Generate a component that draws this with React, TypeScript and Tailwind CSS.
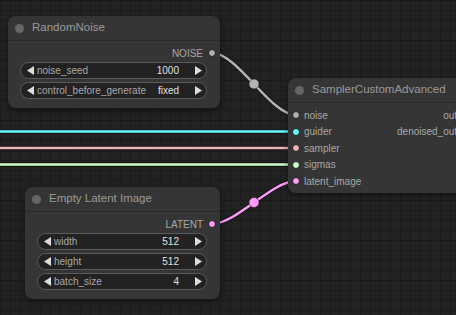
import React from "react";

const FONT = { fontFamily: '"Liberation Sans", Arial, sans-serif' };

function Arrow({ dir }: { dir: "l" | "r" }) {
  return (
    <svg width="7" height="9" viewBox="0 0 7 9" className="shrink-0">
      {dir === "l" ? (
        <polygon points="7,0 7,9 0,4.5" fill="#dddddd" />
      ) : (
        <polygon points="0,0 0,9 7,4.5" fill="#dddddd" />
      )}
    </svg>
  );
}

function Widget({ label, value }: { label: string; value: string }) {
  return (
    <div className="flex h-[17px] items-center rounded-full border border-[#5a5a5a] bg-[#222222] pl-[6px] pr-[4px] text-[10px] leading-none">
      <Arrow dir="l" />
      <span className="ml-[3px] text-[#a8a8a8]">{label}</span>
      <span className="ml-auto text-[#e0e0e0]">{value}</span>
      <span className="ml-[16px]">
        <Arrow dir="r" />
      </span>
    </div>
  );
}

function Dot({ color }: { color: string }) {
  return (
    <span
      className="block h-[8px] w-[8px] shrink-0 rounded-full border border-[#1a1a1a]"
      style={{ backgroundColor: color }}
    />
  );
}

function Title({ text }: { text: string }) {
  return (
    <div className="flex h-[25px] items-center gap-[8px] border-b border-[#2a2a2a] pl-[7px] text-[11.5px] text-[#9a9a9a]">
      <span className="block h-[9px] w-[9px] rounded-full bg-[#666666]" />
      <span>{text}</span>
    </div>
  );
}

function Output({ label, color }: { label: string; color: string }) {
  return (
    <div className="flex h-[16px] items-center justify-end gap-[5px] pr-[4px] text-[10px] text-[#a8a8a8]">
      <span>{label}</span>
      <Dot color={color} />
    </div>
  );
}

function Input({ label, color, out }: { label: string; color: string; out?: string }) {
  return (
    <div className="flex h-[16.5px] items-center text-[10px] text-[#a8a8a8]">
      <div className="flex items-center gap-[4px] pl-[4px]">
        <Dot color={color} />
        <span>{label}</span>
      </div>
      {out && (
        <div className="ml-auto flex items-center gap-[5px] pr-[4px]">
          <span>{out}</span>
          <Dot color="#a0a0a0" />
        </div>
      )}
    </div>
  );
}

export default function App() {
  const link = (d: string, color: string) => (
    <g>
      <path d={d} stroke="#111111" strokeOpacity="0.7" strokeWidth="4.5" fill="none" />
      <path d={d} stroke={color} strokeWidth="2.5" fill="none" />
    </g>
  );
  return (
    <div
      className="relative h-[315px] w-[456px] overflow-hidden bg-[#222222] bg-[linear-gradient(#1b1b1b_1px,transparent_1px),linear-gradient(90deg,#1b1b1b_1px,transparent_1px)] bg-size-[10px_10px]"
      style={FONT}
    >
      <svg className="absolute left-0 top-0" width="456" height="315">
        {link("M0 131.5 L296 131.5", "#66ffff")}
        {link("M0 148 L296 148", "#ecb4b4")}
        {link("M0 164.5 L296 164.5", "#cdffcd")}
        {link("M212 53 C238 53 270 115 296 115", "#b4b4b4")}
        {link("M212 224 C236 224 272 181 296 181", "#ff9cf9")}
        <circle cx="254" cy="84" r="5" fill="#b4b4b4" stroke="#111" strokeOpacity="0.5" />
        <circle cx="254" cy="202.5" r="5" fill="#ff9cf9" stroke="#111" strokeOpacity="0.5" />
      </svg>

      {/* RandomNoise */}
      <div className="absolute left-[8px] top-[16px] flex w-[212px] flex-col rounded-[8px] bg-[#353535] pb-[9px] shadow-[0_2px_6px_rgba(0,0,0,0.45)]">
        <Title text="RandomNoise" />
        <div className="pt-[4px]">
          <Output label="NOISE" color="#b0b0b0" />
        </div>
        <div className="mt-[1px] flex flex-col gap-[3px] pl-[12px] pr-[13px]">
          <Widget label="noise_seed" value="1000" />
          <Widget label="control_before_generate" value="fixed" />
        </div>
      </div>

      {/* SamplerCustomAdvanced */}
      <div className="absolute left-[288px] top-[78px] flex w-[200px] flex-col rounded-[8px] bg-[#353535] pb-[3.5px] shadow-[0_2px_6px_rgba(0,0,0,0.45)]">
        <Title text="SamplerCustomAdvanced" />
        <div className="flex flex-col pt-[4px]">
          <Input label="noise" color="#b0b0b0" out="output" />
          <Input label="guider" color="#66ffff" out="denoised_output" />
          <Input label="sampler" color="#ecb4b4" />
          <Input label="sigmas" color="#cdffcd" />
          <Input label="latent_image" color="#ff9cf9" />
        </div>
      </div>

      {/* Empty Latent Image */}
      <div className="absolute left-[25px] top-[187px] flex w-[195px] flex-col rounded-[8px] bg-[#353535] pb-[9px] shadow-[0_2px_6px_rgba(0,0,0,0.45)]">
        <Title text="Empty Latent Image" />
        <div className="pt-[4px]">
          <Output label="LATENT" color="#ff9cf9" />
        </div>
        <div className="mt-[1px] flex flex-col gap-[3px] pl-[12px] pr-[13px]">
          <Widget label="width" value="512" />
          <Widget label="height" value="512" />
          <Widget label="batch_size" value="4" />
        </div>
      </div>
    </div>
  );
}
